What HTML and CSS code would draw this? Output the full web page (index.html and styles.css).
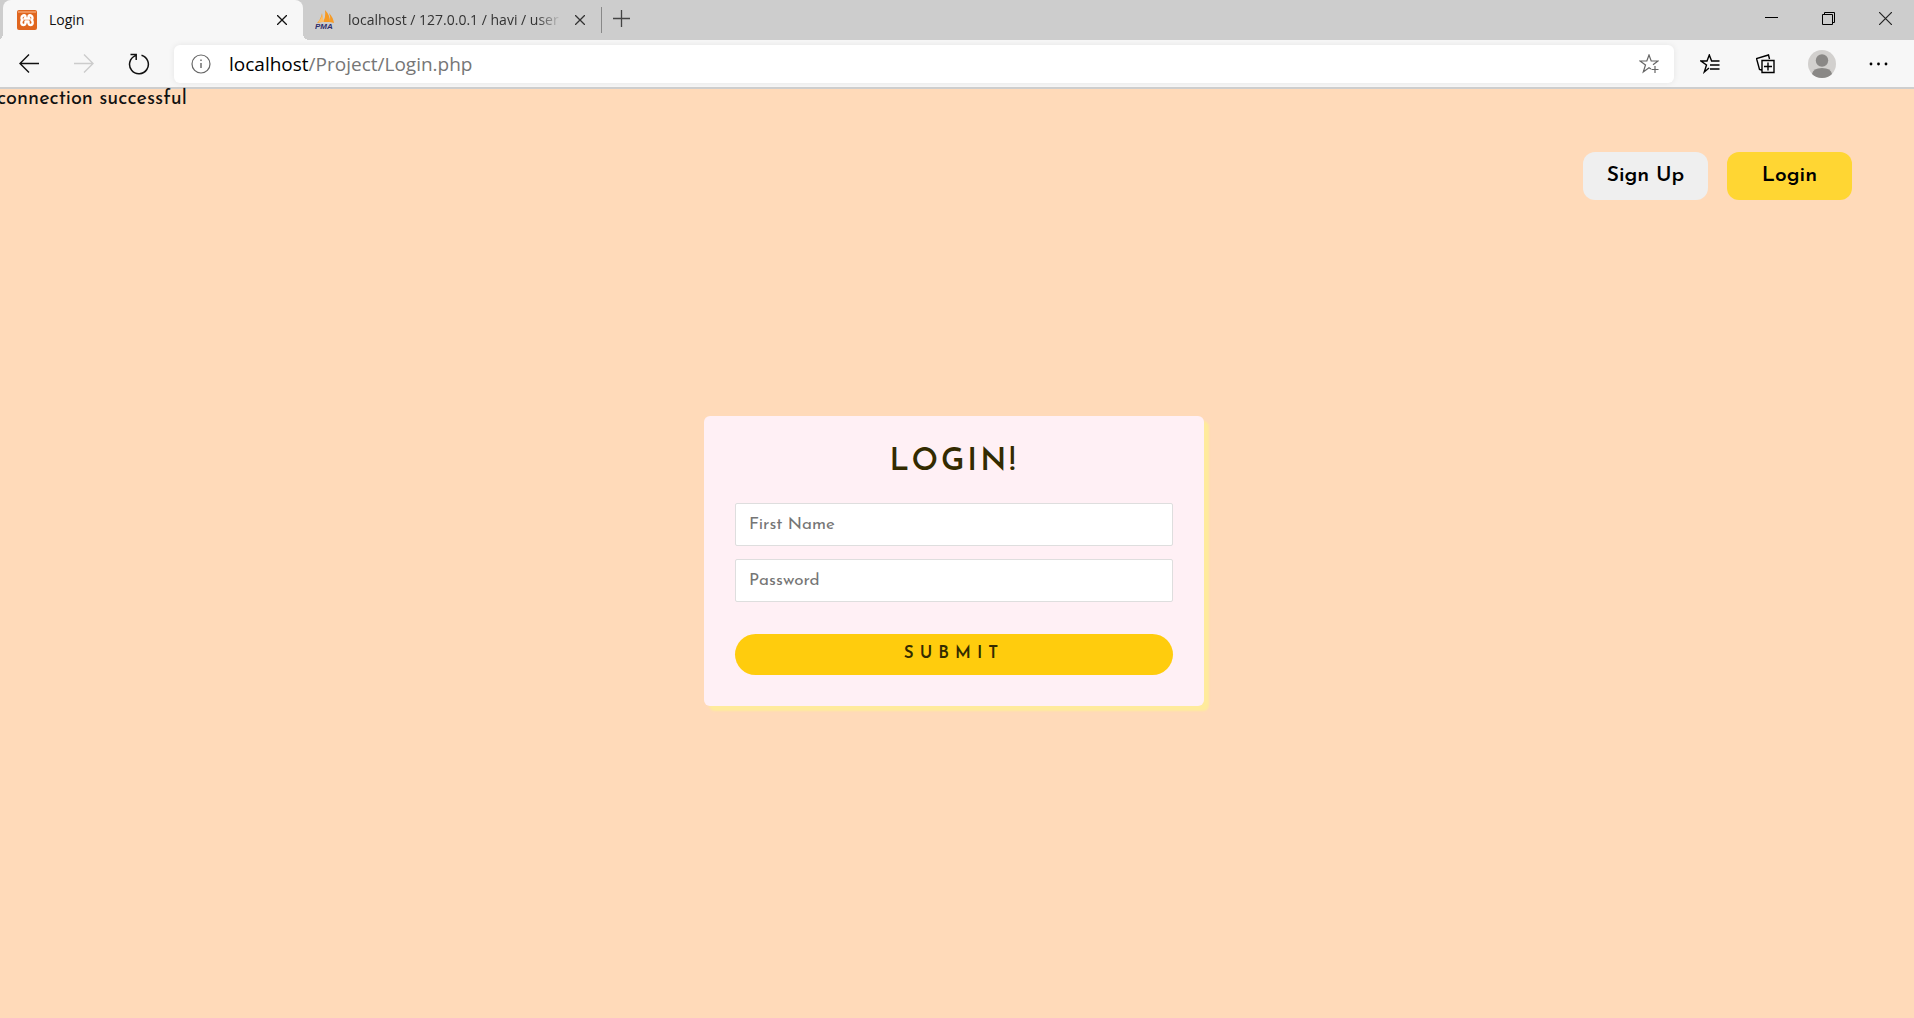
FILE: index.html
```html
<!DOCTYPE html>
<html lang="en">
<head>
<meta charset="utf-8">
<title>Login</title>
<link rel="stylesheet" href="styles.css">
</head>
<body>
<header class="browser">
  <div class="tab-strip">
    <div class="tab tab-active">
      <svg class="favicon" viewBox="0 0 20 20" width="20" height="20" aria-hidden="true">
        <rect width="20" height="20" rx="2" fill="#e0661f"/>
        <rect x="1" y="1" width="18" height="2" fill="#f0935a"/>
        <path d="M6.200 5.500C9 4.500 9 7.500 7.500 8.500h5C11 7.500 11 4.500 13.800 5.500C16.500 6.500 15.500 9.500 14.500 10C16.500 11.500 16 15 13.500 15C11 15 11.500 12.500 11.500 11.500H8.500C8.500 12.500 9 15 6.500 15C4 15 3.500 11.500 5.500 10C4.500 9.500 3.500 6.500 6.200 5.500Z" fill="none" stroke="#fff" stroke-width="2.400" stroke-linejoin="round"/>
      </svg>
      <span class="tab-title">Login</span>
      <button class="tab-close" aria-label="Close tab"><svg viewBox="0 0 10 10" width="10" height="10"><path d="M0 0L10 10M10 0L0 10" stroke="#111" stroke-width="1.300"/></svg></button>
    </div>
    <div class="tab tab-idle">
      <svg class="favicon" viewBox="0 0 20 20" width="20" height="20" aria-hidden="true">
        <path d="M2 13Q6 9 7 3Q8 8 7 12ZM8 12Q11 7 10 0Q15 5 15 12ZM15 12Q16 7 14 3Q18 7 19 13Z" fill="#f79a22"/>
        <path d="M3 12Q7 8 7 4L9 12Z" fill="#fbbf6a"/>
        <text x="0" y="19" class="pma">PMA</text>
      </svg>
      <span class="tab-title">localhost / 127.0.0.1 / havi / user</span>
      <button class="tab-close" aria-label="Close tab"><svg viewBox="0 0 10 10" width="10" height="10"><path d="M0 0L10 10M10 0L0 10" stroke="#333" stroke-width="1.300"/></svg></button>
    </div>
    <button class="new-tab" aria-label="New tab"><svg viewBox="0 0 17 17" width="17" height="17"><path d="M8.500 0V17M0 8.500H17" stroke="#444" stroke-width="1.300"/></svg></button>
    <div class="window-controls">
      <button aria-label="Minimize"><svg viewBox="0 0 13 13" width="13" height="13"><path d="M0 5.500H13" stroke="#000"/></svg></button>
      <button aria-label="Restore"><svg viewBox="0 0 13 13" width="13" height="13"><path d="M.5 2.500H10.500V12.500H.5ZM2.500 2.500V.5H12.500V10.500H10.500" fill="none" stroke="#000"/></svg></button>
      <button aria-label="Close"><svg viewBox="0 0 13 13" width="13" height="13"><path d="M0 0L13 13M13 0L0 13" stroke="#222" stroke-width="1.200"/></svg></button>
    </div>
  </div>
  <div class="toolbar">
    <button class="nav-button" aria-label="Back"><svg viewBox="0 0 20 20" width="20" height="20"><path d="M20 9.500H1M10 .5L1 9.500L10 18.500" fill="none" stroke="#111" stroke-width="1.400"/></svg></button>
    <button class="nav-button" aria-label="Forward"><svg viewBox="0 0 20 20" width="20" height="20"><path d="M0 9.500H19M10 .5L19 9.500L10 18.500" fill="none" stroke="#ccc" stroke-width="1.400"/></svg></button>
    <button class="nav-button" aria-label="Refresh"><svg viewBox="0 0 22 22" width="22" height="22"><path d="M13.500 2.300A9.400 9.400 0 1 1 7.500 2.600M2.500 1.500H8.200V7" fill="none" stroke="#111" stroke-width="1.500"/></svg></button>
    <div class="address">
      <svg viewBox="0 0 20 20" width="20" height="20" aria-hidden="true"><circle cx="10" cy="10" r="9" fill="none" stroke="#666" stroke-width="1.200"/><path d="M10 9V14M10 5.500V7" stroke="#666" stroke-width="1.400"/></svg>
      <span class="url"><span class="host">localhost</span>/Project/Login.php</span>
      <button class="favorite" aria-label="Add to favorites"><svg viewBox="0 0 20 20" width="20" height="20"><path d="M12 15L10 13.700L4.300 18L6.500 11L1 7H7.800L10 1L12.200 7H19L14 10.800M16 12V19M12.500 15.500H19.500" fill="none" stroke="#666" stroke-width="1.200"/></svg></button>
    </div>
    <div class="actions">
      <button aria-label="Favorites"><svg viewBox="0 0 20 20" width="20" height="20"><path d="M9 14L4.300 18L6.500 11L1 7H7L9.300 1L11.600 7H19.500M10 11H19.500M10 15H19.500" fill="none" stroke="#000" stroke-width="1.400"/></svg></button>
      <button aria-label="Collections"><svg viewBox="0 0 20 20" width="20" height="20"><path d="M6 6.500H18V18.500H6ZM12 8.500V16.500M8 12.500H16M5.500 16L3.500 15.500L.5 4.500L12.500 1L13.500 5" fill="none" stroke="#000" stroke-width="1.400"/></svg></button>
      <button aria-label="Profile"><svg viewBox="0 0 28 28" width="28" height="28"><circle cx="14" cy="14" r="14" fill="#d2d0ce"/><circle cx="14" cy="10.500" r="6.200" fill="#8a8886"/><path d="M4 24Q5 18 14 18T24 24Q20 28 14 28T4 24Z" fill="#8a8886"/></svg></button>
      <button aria-label="Settings and more"><svg viewBox="0 0 20 4" width="20" height="4"><circle cx="3" cy="2" r="1.400"/><circle cx="10.500" cy="2" r="1.400"/><circle cx="18" cy="2" r="1.400"/></svg></button>
    </div>
  </div>
</header>
<div class="page">
  <p class="status">connection successful</p>
  <nav class="site-nav">
    <button class="nav-link">Sign Up</button>
    <button class="nav-link nav-current">Login</button>
  </nav>
  <main class="content">
    <form class="card">
      <h1>LOGIN!</h1>
      <input type="text" placeholder="First Name" aria-label="First Name">
      <input type="password" placeholder="Password" aria-label="Password">
      <button class="submit" type="button">SUBMIT</button>
    </form>
  </main>
</div>
</body>
</html>
```
FILE: styles.css
```css
* {
  box-sizing: border-box;
}

body {
  display: flex;
  flex-direction: column;
  min-height: 100vh;
  margin: 0;
  overflow-x: hidden;
  background: #ffdab9;
  font-family: "Josefin Sans", Lato, sans-serif;
}

button {
  padding: 0;
  border: 0;
  background: none;
  color: inherit;
  font-family: inherit;
}

svg {
  display: block;
  flex: none;
}

.browser {
  background: #f7f7f7;
  border-bottom: 2px solid #cecece;
  font-family: "Segoe UI", "Open Sans", sans-serif;
}

.tab-strip {
  display: flex;
  height: 40px;
  padding-left: 3px;
  background: #cdcdcd;
}

.tab {
  display: flex;
  align-items: center;
  width: 300px;
  padding: 0 16px 0 14px;
  font-size: 14px;
}

.tab-active {
  position: relative;
  background: #f7f7f7;
  border-radius: 8px 8px 0 0;
  color: #111;
}

/* Flared foot where the active tab meets the toolbar */
.tab-active::before,
.tab-active::after {
  content: "";
  position: absolute;
  bottom: 0;
  width: 6px;
  height: 6px;
}

.tab-active::before {
  right: 100%;
  background: radial-gradient(circle at 0 0, transparent 6px, #f7f7f7 6px);
}

.tab-active::after {
  left: 100%;
  background: radial-gradient(circle at 100% 0, transparent 6px, #f7f7f7 6px);
}

.tab-idle {
  width: 299px;
  padding-left: 12px;
  border-right: 1px solid #888;
  border-image: linear-gradient(transparent 20%, #888 20%, #888 80%, transparent 80%) 1;
  color: #333;
}

.tab-title {
  flex: 1;
  margin: 0 8px 0 12px;
  padding-bottom: 2px;
  white-space: nowrap;
}

.tab-idle .tab-title {
  margin: 0 13px;
  -webkit-mask-image: linear-gradient(to right, #000 88%, transparent);
  mask-image: linear-gradient(to right, #000 88%, transparent);
}

.tab-close {
  display: grid;
  place-items: center;
  width: 10px;
  height: 20px;
}

.pma {
  fill: #2d2d6b;
  font: italic bold 8px "Liberation Sans", sans-serif;
}

.new-tab {
  display: grid;
  place-items: center;
  width: 38px;
  height: 36px;
}

.window-controls {
  display: flex;
  height: 36px;
  margin-left: auto;
}

.window-controls button {
  display: grid;
  place-items: center;
  width: 57px;
}

.toolbar {
  display: flex;
  align-items: center;
  height: 47px;
  padding: 0 8px 0 1px;
}

.nav-button {
  display: grid;
  place-items: center;
  width: 55px;
  height: 38px;
}

.address {
  display: flex;
  flex: 1;
  align-items: center;
  height: 38px;
  margin: 0 8px;
  padding: 0 15px 0 17px;
  border-radius: 6px;
  background: #fff;
  box-shadow: 0 0 6px rgba(0, 0, 0, 0.08);
}

.url {
  flex: 1;
  margin-left: 18px;
  color: #767676;
  font-size: 19px;
}

.host {
  color: #000;
}

.actions {
  display: flex;
}

.actions button {
  display: grid;
  place-items: center;
  width: 56px;
  height: 38px;
}

.page {
  display: flex;
  flex: 1;
  flex-direction: column;
  margin: 0 3px 0 -3px;
}

.status {
  margin: 0;
  color: #111;
  font-size: 20px;
  line-height: 20px;
}

.site-nav {
  display: flex;
  justify-content: flex-end;
  gap: 19px;
  margin: 43px 59px 0 0;
}

.nav-link {
  width: 125px;
  height: 48px;
  padding-bottom: 2px;
  border-radius: 12px;
  background: #efefef;
  color: #000;
  font-size: 21px;
  font-weight: 600;
}

.nav-current {
  background: #ffd633;
}

.content {
  display: flex;
  flex: 1;
  align-items: center;
  justify-content: center;
  padding-bottom: 96px;
}

.card {
  display: flex;
  flex-direction: column;
  width: 500px;
  max-width: 100%;
  padding: 27px 31px 31px;
  border-radius: 6px;
  background: #fff0f5;
  box-shadow: 5px 5px 2px #ffeb9c;
}

.card h1 {
  margin: 0 0 20px;
  color: #332b00;
  font-size: 31px;
  font-weight: 600;
  line-height: 40px;
  letter-spacing: 3px;
  text-align: center;
}

.card input {
  width: 100%;
  height: 43px;
  margin-bottom: 13px;
  padding: 0 13px;
  border: 1px solid #dedede;
  border-radius: 2px;
  background: #fff;
  font-family: inherit;
  font-size: 17px;
}

.card input::placeholder {
  color: #757575;
}

.submit {
  height: 41px;
  margin-top: 19px;
  padding-bottom: 2px;
  border-radius: 21px;
  background: #ffcc0d;
  color: #332b00;
  font-size: 17px;
  font-weight: 600;
  letter-spacing: 6px;
}
```
